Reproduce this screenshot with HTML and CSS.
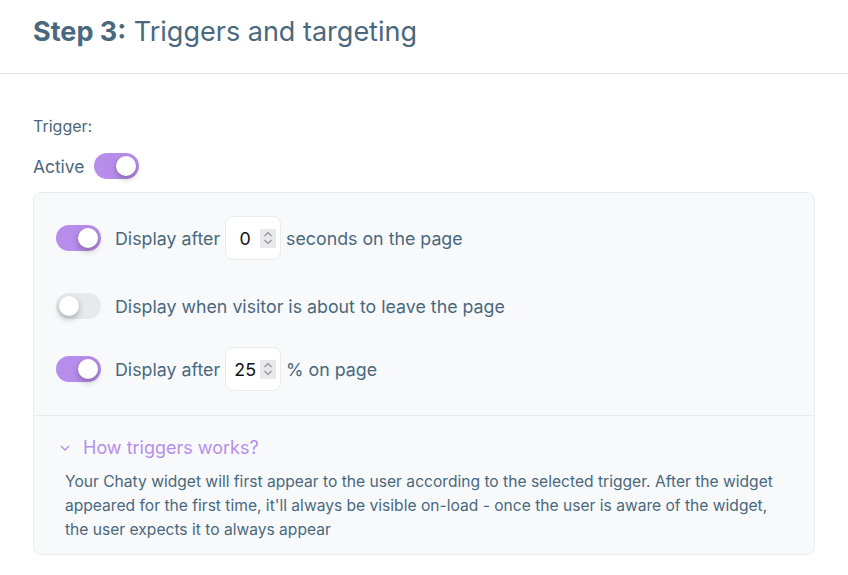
FILE: index.html
```html
<!DOCTYPE html>
<html lang="en">
<head>
  <meta charset="UTF-8">
  <title>Triggers and targeting</title>
  <link rel="stylesheet" href="styles.css">
</head>
<body>
  <div class="page">
    <div class="step-head">
      <h2><b>Step 3:</b> Triggers and targeting</h2>
    </div>

    <div class="step-body">
      <p class="label">Trigger:</p>
      <div class="active-row">
        <span>Active</span>
        <span class="switch on"><span class="knob"></span></span>
      </div>

      <div class="panel">
        <div class="rows">
          <div class="row">
            <span class="switch on"><span class="knob"></span></span>
            <span>Display after</span>
            <span class="num">
              <span class="val">0</span>
              <span class="spin">
                <svg width="12" height="18" viewBox="0 0 12 18"><path d="M2.5 7 L6 3.5 L9.5 7 M2.5 11 L6 14.5 L9.5 11" fill="none" stroke="#8e8e93" stroke-width="1.1"/></svg>
              </span>
            </span>
            <span>seconds on the page</span>
          </div>
          <div class="row mid">
            <span class="switch"><span class="knob"></span></span>
            <span>Display when visitor is about to leave the page</span>
          </div>
          <div class="row">
            <span class="switch on"><span class="knob"></span></span>
            <span>Display after</span>
            <span class="num">
              <span class="val">25</span>
              <span class="spin">
                <svg width="12" height="18" viewBox="0 0 12 18"><path d="M2.5 7 L6 3.5 L9.5 7 M2.5 11 L6 14.5 L9.5 11" fill="none" stroke="#8e8e93" stroke-width="1.1"/></svg>
              </span>
            </span>
            <span>% on page</span>
          </div>
        </div>

        <div class="help">
          <div class="help-title">
            <svg width="10" height="8" viewBox="0 0 10 8"><path d="M1 2 L5 6 L9 2" fill="none" stroke="#b78deb" stroke-width="1.3"/></svg>
            How triggers works?
          </div>
          <p>Your Chaty widget will first appear to the user according to the selected trigger. After the widget appeared for the first time, it'll always be visible on-load - once the user is aware of the widget, the user expects it to always appear</p>
        </div>
      </div>
    </div>
  </div>
</body>
</html>
```

FILE: styles.css
```css
body {
  margin: 0;
  font-family: Inter, "Noto Sans", sans-serif;
  color: #49687e;
  background: #fff;
}
.page {
  width: 848px;
}
.step-head {
  border-bottom: 1px solid #e3e3e3;
  padding: 14px 33px 0;
  height: 59px;
}
.step-head h2 {
  margin: 0;
  font-size: 27px;
  font-weight: 400;
  line-height: 36px;
}
.step-head b {
  font-weight: 700;
}
.step-body {
  padding: 40px 33px 0;
}
.label {
  margin: 0 0 15px;
  font-size: 16px;
  line-height: 24px;
}
.active-row {
  display: flex;
  align-items: center;
  gap: 10px;
  font-size: 17.4px;
  margin-bottom: 13px;
}
.switch {
  position: relative;
  display: inline-block;
  flex: none;
  width: 45px;
  height: 26px;
  border-radius: 13px;
  background: #e6eaed;
}
.switch.on {
  background: #b78deb;
}
.knob {
  position: absolute;
  top: 3px;
  left: 3px;
  width: 20px;
  height: 20px;
  border-radius: 50%;
  background: #fff;
  box-shadow: 0 3px 6px rgba(0, 0, 0, 0.28);
}
.switch.on .knob {
  left: 22px;
}
.panel {
  border: 1px solid #e8ecef;
  border-radius: 8px;
  background: #f8f9fb;
}
.rows {
  padding: 23px 22px 24px;
  display: flex;
  flex-direction: column;
  gap: 22px;
  border-bottom: 1px solid #e8ecef;
}
.row {
  display: flex;
  align-items: center;
  gap: 5px;
  min-height: 44px;
  font-size: 17.8px;
}
.row.mid {
  padding-top: 5px;
  min-height: 38px;
}
.row .switch {
  margin-right: 9px;
}
.num {
  display: flex;
  align-items: center;
  width: 56px;
  height: 44px;
  box-sizing: border-box;
  background: #fff;
  border: 1px solid #e8ecef;
  border-radius: 8px;
  padding-left: 4px;
  color: #111;
}
.val {
  flex: 1;
  text-align: center;
}
.spin {
  display: flex;
  align-items: center;
  justify-content: center;
  width: 16px;
  height: 19px;
  margin-right: 4px;
  background: #e9e9ed;
}
.help {
  padding: 20px 32px 12px 31px;
}
.help-title {
  display: flex;
  align-items: center;
  gap: 13px;
  color: #b78deb;
  font-size: 18px;
  line-height: 24px;
  margin-left: -5px;
}
.help p {
  margin: 10px 0 0;
  font-size: 15.6px;
  line-height: 24px;
}
```
